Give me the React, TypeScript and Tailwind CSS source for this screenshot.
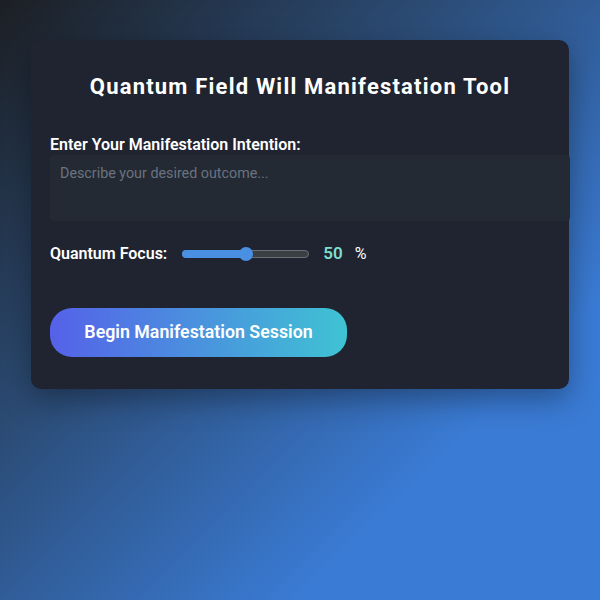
import { useState } from 'react';

export default function App() {
  const [intention, setIntention] = useState('');
  const [focus] = useState(50);

  return (
    <div
      className="min-h-screen w-full pt-10 bg-[linear-gradient(135deg,#1c1f24_0%,#2b4a72_35%,#3a7bd5_75%,#3a7bd5_100%)]"
      style={{ fontFamily: 'Roboto, "Liberation Sans", sans-serif' }}
    >
      <div className="mx-auto w-[538px] rounded-[10px] bg-[#1f2430] px-[19px] pt-[32px] pb-[32px] shadow-[0_10px_30px_rgba(0,0,0,0.35)]">
        <h1 className="text-center text-[22px] font-bold leading-[30px] tracking-[1.2px] text-white">
          Quantum Field Will Manifestation Tool
        </h1>

        <label className="mt-[33px] block text-[16px] font-semibold leading-[20px] text-white">
          Enter Your Manifestation Intention:
        </label>
        <textarea
          value={intention}
          onChange={(e) => setIntention(e.target.value)}
          placeholder="Describe your desired outcome..."
          className="mt-0 box-content block h-[46px] w-full resize-none rounded-[4px] bg-[#232a33] px-[10px] py-[10px] text-[14.3px] leading-[16px] text-white outline-none placeholder:text-[#6b7280]"
        />

        <div className="mt-[20px] flex items-center">
          <span className="text-[16px] font-semibold leading-[20px] text-white">Quantum Focus:</span>
          {/* slider */}
          <div className="relative ml-[15px] h-[14px] w-[127px]">
            <div className="absolute left-0 right-0 top-[3px] h-[8px] rounded-full border border-[#6b6f75] bg-[#3b3e43]" />
            <div
              className="absolute left-0 top-[3px] h-[8px] rounded-full bg-[#4a90e2]"
              style={{ width: `${focus}%` }}
            />
            <div
              className="absolute top-0 h-[14px] w-[14px] -translate-x-1/2 rounded-full bg-[#4a90e2]"
              style={{ left: `${focus}%` }}
            />
          </div>
          <span className="ml-[14px] text-[17px] font-semibold text-[#7ddfd0]">{focus}</span>
          <span className="ml-[12px] text-[16px] text-white">%</span>
        </div>

        <button className="mt-[41px] h-[49px] w-[297px] rounded-[22px] bg-[linear-gradient(90deg,#5561e9,#3fc3d3)] text-[17.8px] font-semibold text-white">
          Begin Manifestation Session
        </button>
      </div>
    </div>
  );
}
